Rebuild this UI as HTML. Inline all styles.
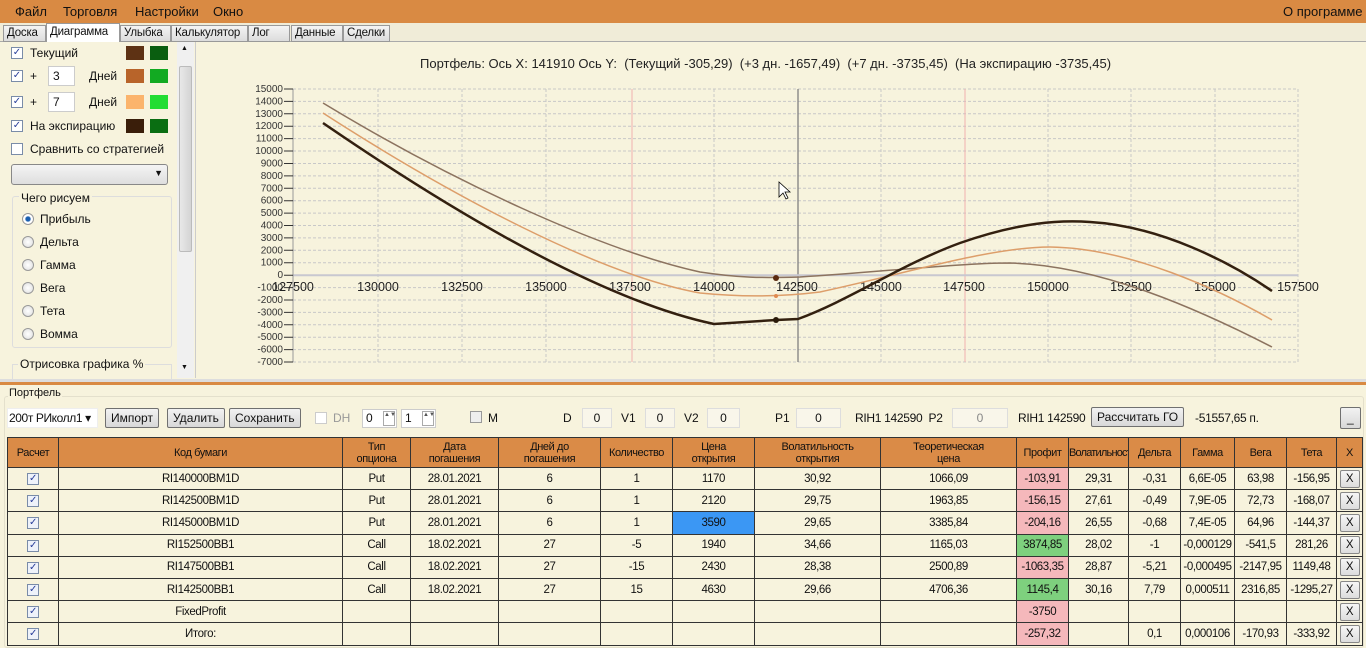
<!DOCTYPE html>
<html><head><meta charset="utf-8"><style>
*{box-sizing:border-box;margin:0;padding:0}
body{width:1366px;height:648px;overflow:hidden;background:#f7f3dd;font-family:"Liberation Sans",sans-serif;font-size:12px;color:#111;position:relative}
.a{position:absolute}
.menu{left:0;top:0;width:1366px;height:23px;background:#d98a43}
.menu span{position:absolute;top:4px;font-size:13px}
.tabs{left:0;top:23px;width:1366px;height:19px;background:#f0ecd8;border-bottom:1px solid #aaa}
.tab{position:absolute;top:2px;height:17px;border:1px solid #999;background:linear-gradient(#f4f4f4,#dcdcdc);font-size:11.5px;padding:1px 3px 0;letter-spacing:-0.2px;white-space:nowrap;overflow:hidden}
.cb{position:absolute;width:12px;height:12px;border:1px solid #7a8ca8;background:#fff;font-size:10px;line-height:10px;text-align:center;color:#2a3f9a}
.sw{position:absolute;width:18px;height:14px}
.inp{position:absolute;background:#fff;border:1px solid #ccc;font-size:12px;padding:2px 4px}
.rad{position:absolute;width:12px;height:12px;border-radius:50%;border:1px solid #999;background:radial-gradient(#fff,#ddd)}
.btn{position:absolute;height:20px;border:1px solid #707070;border-radius:2px;background:linear-gradient(#f2f2f2,#d8d8d8);font-size:12px;padding:2px 5px;white-space:nowrap}
table{position:absolute;left:7px;top:437px;width:1355px;table-layout:fixed;border-collapse:collapse;font-size:11.5px;background:#f7f3dd}
td,th{border:1px solid #333;text-align:center;height:22.2px;padding:0;white-space:nowrap;overflow:hidden;letter-spacing:-0.4px}
th{background:#da8b47;font-weight:normal;height:30px;line-height:12px;font-size:11px}
.pk{background:#f5b8bb}.gr{background:#7ed07e}.bl{background:#3b97f4}
.cbx{display:inline-block;width:12px;height:12px;border:1px solid #7a8ca8;background:#eef2fa;font-size:10px;line-height:10px;color:#2a3f9a}
.x{display:inline-block;width:20px;height:18px;border:1px solid #888;border-radius:2px;background:linear-gradient(#f6f6f6,#ddd);line-height:16px}
</style></head><body>
<div class="a menu"><span style="left:15px">Файл</span><span style="left:63px">Торговля</span><span style="left:135px">Настройки</span><span style="left:213px">Окно</span><span style="left:1283px">О программе</span></div>
<div class="a tabs">
<div class="tab" style="left:3px;width:43px">Доска</div>
<div class="tab" style="left:46px;width:74px;top:0;height:20px;background:#fff;border-bottom:none;padding-top:2px">Диаграмма</div>
<div class="tab" style="left:120px;width:51px">Улыбка</div>
<div class="tab" style="left:171px;width:77px">Калькулятор</div>
<div class="tab" style="left:248px;width:42px">Лог</div>
<div class="tab" style="left:291px;width:52px">Данные</div>
<div class="tab" style="left:343px;width:47px">Сделки</div>
</div>
<div class="a" style="left:0;top:42px;width:196px;height:336px;background:#f7f3dd;border-right:1px solid #ccc">
<div class="cb" style="left:11px;top:5px">✓</div><div class="a" style="left:30px;top:4px">Текущий</div>
<div class="sw" style="left:126px;top:4px;background:#5e3214"></div><div class="sw" style="left:150px;top:4px;background:#0a5e10"></div>
<div class="cb" style="left:11px;top:28px">✓</div><div class="a" style="left:30px;top:27px">+</div><div class="inp" style="left:48px;top:24px;width:27px;height:20px">3</div><div class="a" style="left:89px;top:27px">Дней</div>
<div class="sw" style="left:126px;top:27px;background:#b8642a"></div><div class="sw" style="left:150px;top:27px;background:#12aa22"></div>
<div class="cb" style="left:11px;top:54px">✓</div><div class="a" style="left:30px;top:53px">+</div><div class="inp" style="left:48px;top:50px;width:27px;height:20px">7</div><div class="a" style="left:89px;top:53px">Дней</div>
<div class="sw" style="left:126px;top:53px;background:#fbb46c"></div><div class="sw" style="left:150px;top:53px;background:#22dd33"></div>
<div class="cb" style="left:11px;top:78px">✓</div><div class="a" style="left:30px;top:77px">На экспирацию</div>
<div class="sw" style="left:126px;top:77px;background:#3a1e0a"></div><div class="sw" style="left:150px;top:77px;background:#0a6e12"></div>
<div class="cb" style="left:11px;top:101px"></div><div class="a" style="left:30px;top:100px">Сравнить со стратегией</div>
<div class="a" style="left:11px;top:122px;width:157px;height:21px;border:1px solid #888;border-radius:3px;background:linear-gradient(#f4f4f4,#dedede)"><span class="a" style="right:4px;top:3px;font-size:9px">▼</span></div>
<div class="a" style="left:12px;top:154px;width:160px;height:152px;border:1px solid #ddd;border-radius:3px"></div>
<div class="a" style="left:19px;top:149px;background:#f7f3dd;padding:0 2px">Чего рисуем</div>
<div class="rad" style="left:22px;top:171px;background:radial-gradient(#1a5fb0 30%,#fff 45%)"></div><div class="a" style="left:40px;top:170px">Прибыль</div>
<div class="rad" style="left:22px;top:194px"></div><div class="a" style="left:40px;top:193px">Дельта</div>
<div class="rad" style="left:22px;top:217px"></div><div class="a" style="left:40px;top:216px">Гамма</div>
<div class="rad" style="left:22px;top:240px"></div><div class="a" style="left:40px;top:239px">Вега</div>
<div class="rad" style="left:22px;top:263px"></div><div class="a" style="left:40px;top:262px">Тета</div>
<div class="rad" style="left:22px;top:286px"></div><div class="a" style="left:40px;top:285px">Вомма</div>
<div class="a" style="left:12px;top:322px;width:160px;height:20px;border:1px solid #ddd"></div>
<div class="a" style="left:18px;top:315px;background:#f7f3dd;padding:0 2px">Отрисовка графика %</div>
<div class="a" style="left:177px;top:0;width:17px;height:336px;background:#f0f0f0"><div class="a" style="left:2px;top:24px;width:13px;height:186px;border:1px solid #bbb;border-radius:2px;background:linear-gradient(90deg,#e8e8e8,#d4d4d4)"></div><span class="a" style="left:4px;top:3px;font-size:7px">▲</span><span class="a" style="left:4px;top:322px;font-size:7px">▼</span></div>
</div>
<div class="a" style="left:420px;top:56px;font-size:13px;color:#222">Портфель: Ось X: 141910 Ось Y:&nbsp; (Текущий -305,29)&nbsp; (+3 дн. -1657,49)&nbsp; (+7 дн. -3735,45)&nbsp; (На экспирацию -3735,45)</div>
<svg class="a" style="left:0;top:0" width="1366" height="380" font-family="Liberation Sans" font-size="10" fill="#333">
<g stroke="#c8c8c8" stroke-dasharray="3,2" stroke-width="1">
<path d="M293 89H1298M293 101.4H1298M293 113.8H1298M293 126.2H1298M293 138.6H1298M293 151H1298M293 163.5H1298M293 175.9H1298M293 188.3H1298M293 200.7H1298M293 213.1H1298M293 225.5H1298M293 237.9H1298M293 250.3H1298M293 262.7H1298M293 287.6H1298M293 300H1298M293 312.4H1298M293 324.8H1298M293 337.2H1298M293 349.6H1298M293 362H1298"/>
<path d="M378 89V362M462 89V362M546 89V362M714 89V362M881 89V362M1048 89V362M1131 89V362M1215 89V362M1298 89V362"/>
</g>
<path d="M632 89V362M965 89V362" stroke="#f0b0b0"/>
<path d="M798 89V362" stroke="#777" stroke-width="1.2"/>
<path d="M293 275.2H1298" stroke="#c8c8d0" stroke-width="2"/>
<path d="M293 89V362" stroke="#999"/>
<g stroke="#333"><path d="M284 89h9M284 101.4h9M284 113.8h9M284 126.2h9M284 138.6h9M284 151h9M284 163.5h9M284 175.9h9M284 188.3h9M284 200.7h9M284 213.1h9M284 225.5h9M284 237.9h9M284 250.3h9M284 262.7h9M284 275.2h9M284 287.6h9M284 300h9M284 312.4h9M284 324.8h9M284 337.2h9M284 349.6h9M284 362h9"/></g>
<g text-anchor="end">
<text x="283" y="92">15000</text><text x="283" y="104.4">14000</text><text x="283" y="116.8">13000</text><text x="283" y="129.2">12000</text><text x="283" y="141.6">11000</text><text x="283" y="154">10000</text><text x="283" y="166.5">9000</text><text x="283" y="178.9">8000</text><text x="283" y="191.3">7000</text><text x="283" y="203.7">6000</text><text x="283" y="216.1">5000</text><text x="283" y="228.5">4000</text><text x="283" y="240.9">3000</text><text x="283" y="253.3">2000</text><text x="283" y="265.7">1000</text><text x="283" y="278.2">0</text><text x="283" y="290.6">-1000</text><text x="283" y="303">-2000</text><text x="283" y="315.4">-3000</text><text x="283" y="327.8">-4000</text><text x="283" y="340.2">-5000</text><text x="283" y="352.6">-6000</text><text x="283" y="365">-7000</text>
</g>
<g text-anchor="middle" font-size="12.5" fill="#222">
<text x="293" y="291">127500</text><text x="378" y="291">130000</text><text x="462" y="291">132500</text><text x="546" y="291">135000</text><text x="630" y="291">137500</text><text x="714" y="291">140000</text><text x="797" y="291">142500</text><text x="881" y="291">145000</text><text x="964" y="291">147500</text><text x="1048" y="291">150000</text><text x="1131" y="291">152500</text><text x="1215" y="291">155000</text><text x="1298" y="291">157500</text>
</g>
<g fill="none">
<path d="M323 103C450 180 600 250 700 272C740 278 760 278 800 277C880 272 960 263 1010 263C1100 265 1200 310 1272 347" stroke="#8c735f" stroke-width="1.5"/>
<path d="M323 113C450 195 600 275 700 293C740 297 780 297 820 292C900 275 990 247 1050 247C1130 248 1220 290 1272 320" stroke="#dd9e6a" stroke-width="1.5"/>
<path d="M323 123C450 210 600 300 714 324L776 320L798 319C850 300 900 265 960 243C1020 222 1060 220 1090 222C1160 226 1230 262 1272 291" stroke="#33200f" stroke-width="2.5"/>
</g>
<circle cx="776" cy="278" r="3" fill="#5a2a10"/><circle cx="776" cy="296" r="2" fill="#e08a50"/><circle cx="776" cy="320" r="3" fill="#2a1a0a"/>
<path d="M779 182v15l4-4 3 6 2-1-3-6h5z" fill="#fff" stroke="#000" stroke-width="0.8"/>
</svg>
<div class="a" style="left:0;top:379px;width:1366px;height:6px;background:#ddd;border-bottom:3px solid #d98a43"></div>
<div class="a" style="left:4px;top:396px;width:1360px;height:252px;border:1px solid #e4e0cc;border-radius:3px"></div>
<div class="a" style="left:8px;top:387px;font-size:11px;background:#f7f3dd;padding:0 1px">Портфель</div>
<div class="inp" style="left:7px;top:408px;width:91px;height:20px;border-color:#eee;font-size:12px;padding:2px 1px;letter-spacing:-0.4px">200т РИколл1 ▾</div>
<div class="btn" style="left:105px;top:408px">Импорт</div>
<div class="btn" style="left:167px;top:408px">Удалить</div>
<div class="btn" style="left:229px;top:408px">Сохранить</div>
<div class="cb" style="left:315px;top:412px;border-color:#ccc"></div><div class="a" style="left:333px;top:411px;color:#999">DH</div>
<div class="inp" style="left:362px;top:409px;width:35px;height:19px;padding:1px 3px">0<span class="a" style="right:1px;top:1px;width:12px;height:15px;border:1px solid #aaa;font-size:6px;line-height:7px;text-align:center;color:#555">▲▼</span></div>
<div class="inp" style="left:401px;top:409px;width:35px;height:19px;padding:1px 3px">1<span class="a" style="right:1px;top:1px;width:12px;height:15px;border:1px solid #aaa;font-size:6px;line-height:7px;text-align:center;color:#555">▲▼</span></div>
<div class="cb" style="left:470px;top:411px;border-color:#999;background:#eee"></div><div class="a" style="left:488px;top:411px">M</div>
<div class="a" style="left:563px;top:411px">D</div><div class="inp" style="left:582px;top:408px;width:30px;height:20px;border-color:#ddd;background:#f9f6ea;text-align:center">0</div>
<div class="a" style="left:621px;top:411px">V1</div><div class="inp" style="left:645px;top:408px;width:30px;height:20px;border-color:#ddd;background:#f9f6ea;text-align:center">0</div>
<div class="a" style="left:684px;top:411px">V2</div><div class="inp" style="left:707px;top:408px;width:33px;height:20px;border-color:#ddd;background:#f9f6ea;text-align:center">0</div>
<div class="a" style="left:775px;top:411px">P1</div><div class="inp" style="left:796px;top:408px;width:45px;height:20px;border-color:#ddd;background:#f9f6ea;text-align:center">0</div>
<div class="a" style="left:855px;top:411px;letter-spacing:-0.3px">RIH1 142590&nbsp; P2</div><div class="inp" style="left:952px;top:408px;width:56px;height:20px;border-color:#ddd;background:#f9f6ea;text-align:center;color:#888">0</div>
<div class="a" style="left:1018px;top:411px;letter-spacing:-0.3px">RIH1 142590</div>
<div class="btn" style="left:1091px;top:407px">Рассчитать ГО</div>
<div class="a" style="left:1195px;top:411px;letter-spacing:-0.3px">-51557,65 п.</div>
<div class="btn" style="left:1340px;top:407px;width:21px;height:22px;padding:3px 6px">_</div>
<table>
<colgroup><col style="width:51px"><col style="width:284px"><col style="width:68px"><col style="width:88px"><col style="width:102px"><col style="width:72px"><col style="width:82px"><col style="width:126px"><col style="width:136px"><col style="width:52px"><col style="width:60px"><col style="width:52px"><col style="width:54px"><col style="width:52px"><col style="width:50px"><col style="width:26px"></colgroup>
<tr><th>Расчет</th><th>Код бумаги</th><th>Тип<br>опциона</th><th>Дата<br>погашения</th><th>Дней до<br>погашения</th><th>Количество</th><th>Цена<br>открытия</th><th>Волатильность<br>открытия</th><th>Теоретическая<br>цена</th><th>Профит</th><th style="letter-spacing:-0.8px">Волатильность</th><th>Дельта</th><th>Гамма</th><th>Вега</th><th>Тета</th><th>X</th></tr>
<tr><td><span class="cbx">✓</span></td><td>RI140000BM1D</td><td>Put</td><td>28.01.2021</td><td>6</td><td>1</td><td>1170</td><td>30,92</td><td>1066,09</td><td class="pk">-103,91</td><td>29,31</td><td>-0,31</td><td>6,6E-05</td><td>63,98</td><td>-156,95</td><td><span class="x">X</span></td></tr>
<tr><td><span class="cbx">✓</span></td><td>RI142500BM1D</td><td>Put</td><td>28.01.2021</td><td>6</td><td>1</td><td>2120</td><td>29,75</td><td>1963,85</td><td class="pk">-156,15</td><td>27,61</td><td>-0,49</td><td>7,9E-05</td><td>72,73</td><td>-168,07</td><td><span class="x">X</span></td></tr>
<tr><td><span class="cbx">✓</span></td><td>RI145000BM1D</td><td>Put</td><td>28.01.2021</td><td>6</td><td>1</td><td class="bl">3590</td><td>29,65</td><td>3385,84</td><td class="pk">-204,16</td><td>26,55</td><td>-0,68</td><td>7,4E-05</td><td>64,96</td><td>-144,37</td><td><span class="x">X</span></td></tr>
<tr><td><span class="cbx">✓</span></td><td>RI152500BB1</td><td>Call</td><td>18.02.2021</td><td>27</td><td>-5</td><td>1940</td><td>34,66</td><td>1165,03</td><td class="gr">3874,85</td><td>28,02</td><td>-1</td><td>-0,000129</td><td>-541,5</td><td>281,26</td><td><span class="x">X</span></td></tr>
<tr><td><span class="cbx">✓</span></td><td>RI147500BB1</td><td>Call</td><td>18.02.2021</td><td>27</td><td>-15</td><td>2430</td><td>28,38</td><td>2500,89</td><td class="pk">-1063,35</td><td>28,87</td><td>-5,21</td><td>-0,000495</td><td>-2147,95</td><td>1149,48</td><td><span class="x">X</span></td></tr>
<tr><td><span class="cbx">✓</span></td><td>RI142500BB1</td><td>Call</td><td>18.02.2021</td><td>27</td><td>15</td><td>4630</td><td>29,66</td><td>4706,36</td><td class="gr">1145,4</td><td>30,16</td><td>7,79</td><td>0,000511</td><td>2316,85</td><td>-1295,27</td><td><span class="x">X</span></td></tr>
<tr><td><span class="cbx">✓</span></td><td>FixedProfit</td><td></td><td></td><td></td><td></td><td></td><td></td><td></td><td class="pk">-3750</td><td></td><td></td><td></td><td></td><td></td><td><span class="x">X</span></td></tr>
<tr><td><span class="cbx">✓</span></td><td>Итого:</td><td></td><td></td><td></td><td></td><td></td><td></td><td></td><td class="pk">-257,32</td><td></td><td>0,1</td><td>0,000106</td><td>-170,93</td><td>-333,92</td><td><span class="x">X</span></td></tr>
</table>
</body></html>
